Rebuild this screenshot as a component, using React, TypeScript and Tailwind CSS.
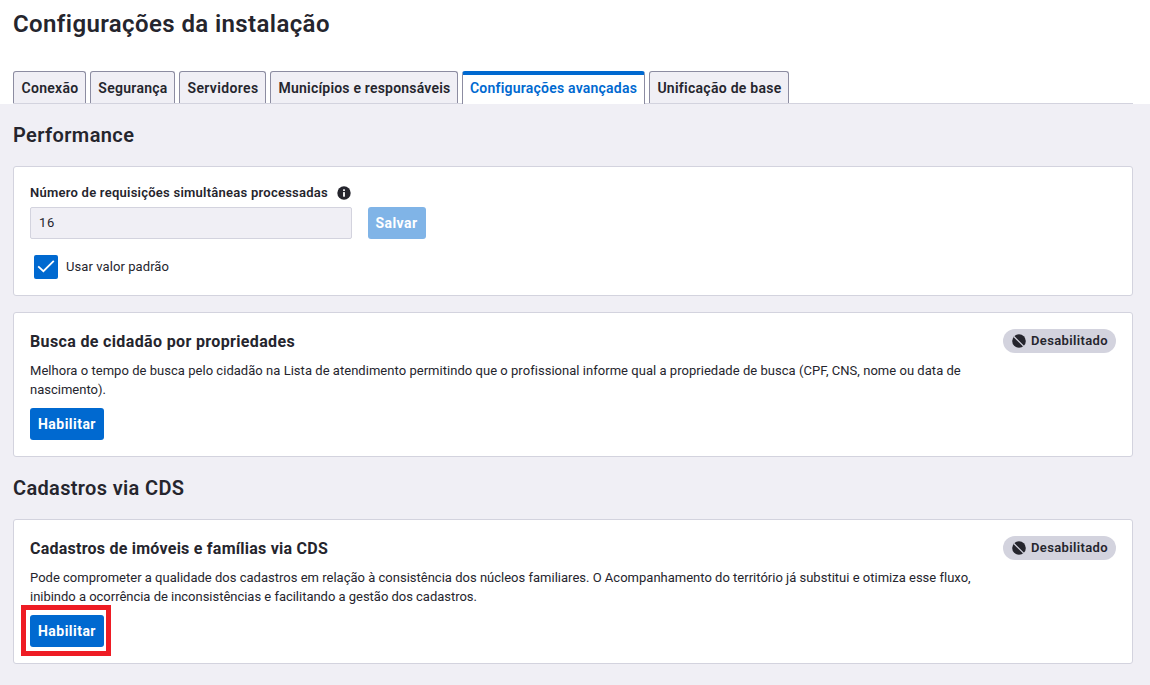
import type { ReactNode } from 'react';

const tabs = [
  { label: 'Conexão', box: 'w-[73px]', text: 'tracking-[0.29px]' },
  { label: 'Segurança', box: 'w-[85px]', text: 'tracking-[0.28px]' },
  { label: 'Servidores', box: 'w-[87px]', text: 'tracking-[0.36px]' },
  { label: 'Municípios e responsáveis', box: 'w-[188px]', text: 'tracking-[0.2px]' },
  { label: 'Configurações avançadas', box: 'w-[183px]', text: 'tracking-[0.22px]', active: true },
  { label: 'Unificação de base', box: 'w-[140px]', text: 'tracking-[0.27px]' },
];

function Tab({ label, box, text, active }: (typeof tabs)[number]) {
  const state = active
    ? 'h-[33px] border-t-4 border-t-[#0069d0] bg-white pb-[3px] text-[#0069d0]'
    : 'h-8 border-t border-t-[#8c8ca1] bg-[#f0eff5] pl-px pt-px';
  return (
    <button
      className={`flex shrink-0 items-center justify-center whitespace-nowrap rounded-t-[3px] border-x border-x-[#8c8ca1] text-sm font-semibold ${state} ${box} ${text}`}
    >
      {label}
    </button>
  );
}

function InfoIcon() {
  return (
    <svg className="size-[14px]" viewBox="0 0 14 14">
      <circle cx="7" cy="7" r="6.7" fill="#25252d" />
      <rect x="6.1" y="3.3" width="1.8" height="1.7" fill="#fff" />
      <rect x="6.1" y="6.1" width="1.8" height="4.6" fill="#fff" />
    </svg>
  );
}

function DisabledBadge() {
  return (
    <span className="flex h-6 w-[113px] shrink-0 items-center rounded-full bg-[#d3d3de] pl-[9px] text-[13px] font-semibold tracking-[0.37px]">
      <svg className="mr-[5px] size-[14px]" viewBox="0 0 14 14">
        <circle cx="7" cy="7" r="6.8" fill="#25252d" />
        <path d="M1.6 2.2 11.8 12.4" stroke="#d3d3de" strokeWidth="1.3" />
      </svg>
      <span className="leading-[18px]">Desabilitado</span>
    </span>
  );
}

function EnableButton() {
  return (
    <button className="flex h-8 w-[74px] items-center justify-center rounded-[3px] bg-[#0069d0] text-sm font-bold tracking-[0.47px] text-white">
      Habilitar
    </button>
  );
}

function FeatureCard({ title, children, action }: { title: ReactNode; children: ReactNode; action: ReactNode }) {
  return (
    <section className="flex h-[145px] w-[1120px] items-start justify-between rounded-[3px] border border-[#d3d3de] bg-white p-4">
      <div>
        <h3 className="h-8 pt-px text-base font-bold leading-6">{title}</h3>
        <p className="whitespace-nowrap text-[13px] leading-[19px]">{children}</p>
        <div className="mt-[9px]">{action}</div>
      </div>
      <DisabledBadge />
    </section>
  );
}

export default function App() {
  return (
    <div className="h-[685px] w-[1150px] overflow-hidden bg-[#f0eff5] font-['Roboto',sans-serif] text-[#25252d]">
      <header className="h-[104px] bg-white pl-[13px]">
        <h1 className="h-[71px] pt-2 text-2xl font-semibold leading-8 tracking-[0.39px]">Configurações da instalação</h1>
        <nav className="flex h-[33px] w-[1120px] items-start gap-1 border-b border-[#d3d3de]">
          {tabs.map((tab) => (
            <Tab key={tab.label} {...tab} />
          ))}
        </nav>
      </header>

      <main className="pl-[13px]">
        <h2 className="h-[62px] pt-[18px] text-xl font-semibold leading-[26px] tracking-[0.4px]">Performance</h2>
        <section className="h-[130px] w-[1120px] rounded-[3px] border border-[#d3d3de] bg-white pl-4 pt-4">
          <label className="flex h-6 items-center pb-1 text-[13px] font-semibold leading-[18px] tracking-[0.25px]">
            <span className="-mt-px mr-[9px]">Número de requisições simultâneas processadas</span>
            <InfoIcon />
          </label>
          <div className="flex gap-4">
            <div className="flex h-8 w-[322px] items-center rounded-[2px] border border-[#d3d3de] bg-[#f0eff5] pl-2 text-[13px] tracking-[0.6px]">
              16
            </div>
            <button className="flex h-8 w-[58px] items-center justify-center rounded-[3px] bg-[#80b4e7] pr-px text-sm font-bold tracking-[0.43px] text-white">
              Salvar
            </button>
          </div>
          <div className="ml-1 mt-4 flex items-center gap-2 text-[13px] tracking-[0.08px]">
            <span className="flex size-6 items-center justify-center rounded-[2px] bg-[#0069d0]">
              <svg className="size-6" viewBox="0 0 24 24" fill="none">
                <path d="M4.2 11.4 9.4 16.2 19.8 5.8" stroke="#fff" strokeWidth="1.8" />
              </svg>
            </span>
            <span>Usar valor padrão</span>
          </div>
        </section>

        <div className="mt-4">
          <FeatureCard
            title={<span className="tracking-[0.355px]">Busca de cidadão por propriedades</span>}
            action={<EnableButton />}
          >
            <span className="tracking-[0.036px]">
              Melhora o tempo de busca pelo cidadão na Lista de atendimento permitindo que o profissional informe qual a propriedade de busca (CPF, CNS, nome ou data de
            </span>
            <br />
            nascimento).
          </FeatureCard>
        </div>

        <h2 className="h-[62px] pt-[18px] text-xl font-semibold leading-[26px] tracking-[0.34px]">Cadastros via CDS</h2>
        <FeatureCard
          title={<span className="tracking-[0.238px]">Cadastros de imóveis e famílias via CDS</span>}
          action={
            <div className="relative w-fit">
              <EnableButton />
              <div className="absolute -left-[9px] -top-[10px] h-[51px] w-[90px] border-5 border-[#ee1c24]" />
            </div>
          }
        >
          <span className="tracking-[0.008px]">
            Pode comprometer a qualidade dos cadastros em relação à consistência dos núcleos familiares. O Acompanhamento do território já substitui e otimiza esse fluxo,
          </span>
          <br />
          <span className="tracking-[-0.02px]">
            inibindo a ocorrência de inconsistências e facilitando a gestão dos cadastros.
          </span>
        </FeatureCard>
      </main>
    </div>
  );
}
